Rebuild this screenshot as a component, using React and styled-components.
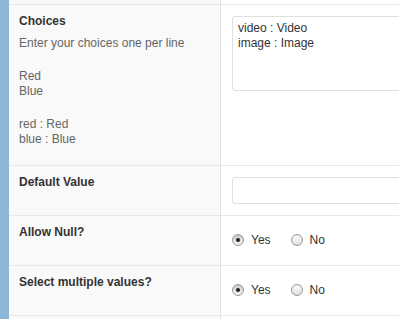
import React from "react";
import styled, { createGlobalStyle } from "styled-components";

const GlobalStyle = createGlobalStyle`
  html, body {
    margin: 0;
    padding: 0;
    background: #ffffff;
    font-family: "Liberation Sans", Arial, sans-serif;
    font-size: 12px;
    color: #333333;
    overflow: hidden;
  }
`;

const fields = [
  { label: "Allow Null?", name: "allow_null" },
  { label: "Select multiple values?", name: "multiple" },
];

const App = () => {
  return (
    <>
      <GlobalStyle />
      <Page>
        <Strip />
        <Table>
          <EdgeRow $h={5}>
            <Label />
            <Value />
          </EdgeRow>
          <Row $h={161}>
            <Label>
              <Title>Choices</Title>
              <Desc>Enter your choices one per line</Desc>
              <Desc>
                Red
                <br />
                Blue
              </Desc>
              <Desc>
                red : Red
                <br />
                blue : Blue
              </Desc>
            </Label>
            <Value>
              <TextArea defaultValue={"video : Video\nimage : Image"} />
            </Value>
          </Row>
          <Row $h={50}>
            <Label>
              <Title>Default Value</Title>
            </Label>
            <Value>
              <Input />
            </Value>
          </Row>
          {fields.map((f) => (
            <Row $h={50} key={f.name}>
              <Label>
                <Title>{f.label}</Title>
              </Label>
              <Value>
                <Radios>
                  <Option>
                    <Radio $checked />
                    Yes
                  </Option>
                  <Option>
                    <Radio />
                    No
                  </Option>
                </Radios>
              </Value>
            </Row>
          ))}
          <EdgeRow $h={10}>
            <Label />
            <Value />
          </EdgeRow>
        </Table>
      </Page>
    </>
  );
};
export default App;

const Page = styled.div`
  display: flex;
  width: 399px;
  height: 319px;
  overflow: hidden;
`;
const Strip = styled.div`
  width: 9px;
  flex: none;
  background: #8db5d7;
`;
const Table = styled.div`
  flex: 1;
  display: flex;
  flex-direction: column;
`;
const Row = styled.div`
  display: grid;
  grid-template-columns: 212px 1fr;
  min-height: ${(p) => p.$h}px;
  box-sizing: border-box;
  border-bottom: 1px solid #e8e8e8;
  flex: none;
`;
const Label = styled.div`
  background: #f9f9f9;
  border-right: 1px solid #e1e1e1;
  padding: 9px 10px;
  line-height: 15px;
`;
const Value = styled.div`
  padding: 11px 11px;
  min-width: 0;
`;
const EdgeRow = styled(Row)`
  height: ${(p) => p.$h}px;
  & > ${Label}, & > ${Value} {
    padding: 0;
  }
`;
const Title = styled.div`
  font-weight: bold;
  color: #333333;
`;
const Desc = styled.p`
  margin: 7px 0 0;
  color: #666666;
  & + & {
    margin-top: 18px;
  }
`;
const TextArea = styled.textarea`
  display: block;
  width: 220px;
  height: 75px;
  box-sizing: border-box;
  border: 1px solid #dfdfdf;
  border-radius: 3px;
  padding: 4px 5px;
  font-family: "Liberation Sans", Arial, sans-serif;
  font-size: 12px;
  line-height: 15px;
  color: #333333;
  resize: none;
  outline: none;
`;
const Input = styled.input`
  display: block;
  width: 220px;
  height: 27px;
  box-sizing: border-box;
  border: 1px solid #dfdfdf;
  border-radius: 3px;
  outline: none;
`;
const Radios = styled.div`
  display: flex;
  align-items: center;
  gap: 20px;
  height: 25px;
`;
const Option = styled.label`
  display: flex;
  align-items: center;
  gap: 7px;
  font-size: 12px;
  color: #333333;
`;
const Radio = styled.span`
  position: relative;
  width: 12px;
  height: 12px;
  box-sizing: border-box;
  border-radius: 50%;
  border: 1px solid #9a9a9a;
  background: ${(p) =>
    p.$checked
      ? "linear-gradient(#cfcfcf, #f4f4f4)"
      : "linear-gradient(#ffffff, #dedede)"};
  box-shadow: inset 0 1px 1px rgba(0, 0, 0, 0.08);
  &::after {
    content: "";
    display: ${(p) => (p.$checked ? "block" : "none")};
    position: absolute;
    left: 3px;
    top: 3px;
    width: 4px;
    height: 4px;
    border-radius: 50%;
    background: #1e1e1e;
  }
`;
